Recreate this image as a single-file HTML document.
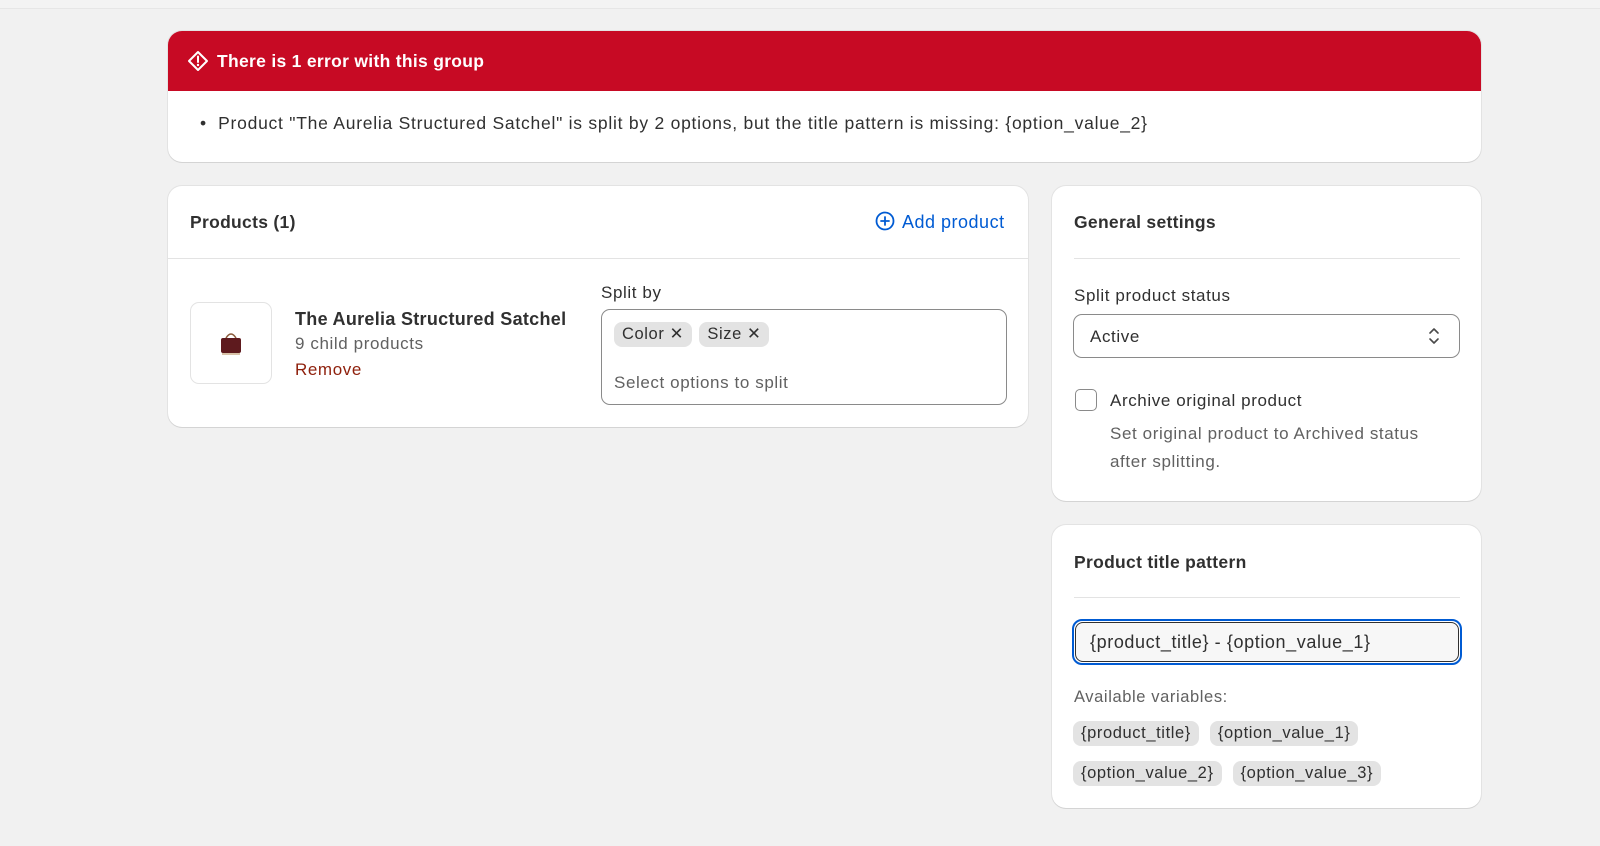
<!DOCTYPE html>
<html><head><meta charset="utf-8"><style>
*{box-sizing:border-box;margin:0;padding:0}
body{width:1600px;height:846px;background:#f1f1f1;font-family:"Liberation Sans",sans-serif;color:#303030;position:relative;overflow:hidden;font-size:17px;letter-spacing:0.6px}
.topline{position:absolute;left:0;top:0;width:1600px;height:9px;border-bottom:1px solid #e6e6e6;background:#f3f3f3}
.card{position:absolute;background:#fff;border-radius:14px;box-shadow:0 1px 0 #d4d4d4,0 0 0 1px #e3e3e3}
.abs{position:absolute;white-space:nowrap}
.b{font-weight:bold;letter-spacing:0.3px}
.chip{display:inline-block;background:#e3e3e3;border-radius:8px;height:25px;line-height:25px;padding:0 8px;font-size:16.5px;color:#303030;letter-spacing:0.6px}
</style></head><body>
<div class="topline"></div>

<div class="card" style="left:168px;top:31px;width:1313px;height:131px;overflow:hidden">
  <div style="position:absolute;left:0;top:0;width:100%;height:60px;background:#c70a24"></div>
  <svg class="abs" style="left:19px;top:19px" width="22" height="22" viewBox="0 0 22 22"><path d="M11 2 L20 11 L11 20 L2 11 Z" fill="none" stroke="#fff" stroke-width="2" stroke-linejoin="round"/><path d="M11 6.5v5.5" stroke="#fff" stroke-width="2" stroke-linecap="round"/><circle cx="11" cy="15" r="1.2" fill="#fff"/></svg>
  <div class="abs b" style="left:49px;top:20px;color:#fff;font-size:17.5px">There is 1 error with this group</div>
  <div class="abs" style="left:32px;top:82px;font-size:17.5px;letter-spacing:0.75px">•&nbsp;&nbsp;Product "The Aurelia Structured Satchel" is split by 2 options, but the title pattern is missing: {option_value_2}</div>
</div>

<div class="card" style="left:168px;top:186px;width:860px;height:241px">
  <div class="abs b" style="left:22px;top:26px;font-size:17.5px">Products (1)</div>
  <svg class="abs" style="left:707px;top:25px" width="20" height="20" viewBox="0 0 20 20"><circle cx="10" cy="10" r="8.5" fill="none" stroke="#005bd3" stroke-width="1.8"/><path d="M10 6v8M6 10h8" stroke="#005bd3" stroke-width="1.8" stroke-linecap="round"/></svg>
  <div class="abs" style="left:734px;top:26px;color:#005bd3;font-size:18px;letter-spacing:0.5px">Add product</div>
  <div style="position:absolute;left:0;top:72px;width:100%;height:1px;background:#e3e3e3"></div>
  <div style="position:absolute;left:22px;top:116px;width:82px;height:82px;border:1px solid #e3e3e3;border-radius:9px"></div>
  <svg class="abs" style="left:49px;top:142px" width="28" height="30" viewBox="0 0 28 30"><path d="M9 10 Q14 2 19 10" fill="none" stroke="#8a5a3a" stroke-width="1.6"/><rect x="4" y="10" width="20" height="15" rx="2" fill="#5e1a1e"/><rect x="5" y="25" width="18" height="2" fill="#d8c2a8"/></svg>
  <div class="abs b" style="left:127px;top:123px;font-size:18px">The Aurelia Structured Satchel</div>
  <div class="abs" style="left:127px;top:148px;color:#616161">9 child products</div>
  <div class="abs" style="left:127px;top:174px;color:#8e1f0b">Remove</div>
  <div class="abs" style="left:433px;top:97px">Split by</div>
  <div style="position:absolute;left:433px;top:123px;width:406px;height:96px;border:1px solid #8a8a8a;border-radius:9px"></div>
  <div class="abs" style="left:446px;top:136px"><span class="chip">Color ✕</span> <span class="chip" style="margin-left:2px">Size ✕</span></div>
  <div class="abs" style="left:446px;top:187px;color:#616161">Select options to split</div>
</div>

<div class="card" style="left:1052px;top:186px;width:429px;height:315px">
  <div class="abs b" style="left:22px;top:26px;font-size:17.5px">General settings</div>
  <div style="position:absolute;left:22px;top:72px;width:386px;height:1px;background:#e3e3e3"></div>
  <div class="abs" style="left:22px;top:100px">Split product status</div>
  <div style="position:absolute;left:21px;top:128px;width:387px;height:44px;border:1px solid #8a8a8a;border-radius:9px"></div>
  <div class="abs" style="left:38px;top:141px">Active</div>
  <svg class="abs" style="left:375px;top:140px" width="14" height="20" viewBox="0 0 14 20"><path d="M3 7l4-4 4 4M3 13l4 4 4-4" fill="none" stroke="#4a4a4a" stroke-width="1.6" stroke-linecap="round" stroke-linejoin="round"/></svg>
  <div style="position:absolute;left:23px;top:203px;width:22px;height:22px;border:1.5px solid #8a8a8a;border-radius:5px"></div>
  <div class="abs" style="left:58px;top:205px">Archive original product</div>
  <div class="abs" style="left:58px;top:234px;color:#616161;line-height:28px;white-space:normal;width:345px">Set original product to Archived status after splitting.</div>
</div>

<div class="card" style="left:1052px;top:525px;width:429px;height:283px">
  <div class="abs b" style="left:22px;top:27px;font-size:17.5px">Product title pattern</div>
  <div style="position:absolute;left:22px;top:72px;width:386px;height:1px;background:#e3e3e3"></div>
  <div style="position:absolute;left:20px;top:94px;width:390px;height:46px;border:2px solid #005bd3;border-radius:10px;padding:1px"><div style="width:100%;height:100%;border:1px solid #303030;border-radius:8px;background:#f7f7f7"></div></div>
  <div class="abs" style="left:38px;top:107px;font-size:18px">{product_title} - {option_value_1}</div>
  <div class="abs" style="left:22px;top:163px;color:#616161;font-size:16.5px">Available variables:</div>
  <div class="abs" style="left:21px;top:196px"><span class="chip">{product_title}</span><span class="chip" style="margin-left:11px">{option_value_1}</span></div>
  <div class="abs" style="left:21px;top:236px"><span class="chip">{option_value_2}</span><span class="chip" style="margin-left:11px">{option_value_3}</span></div>
</div>
</body></html>
